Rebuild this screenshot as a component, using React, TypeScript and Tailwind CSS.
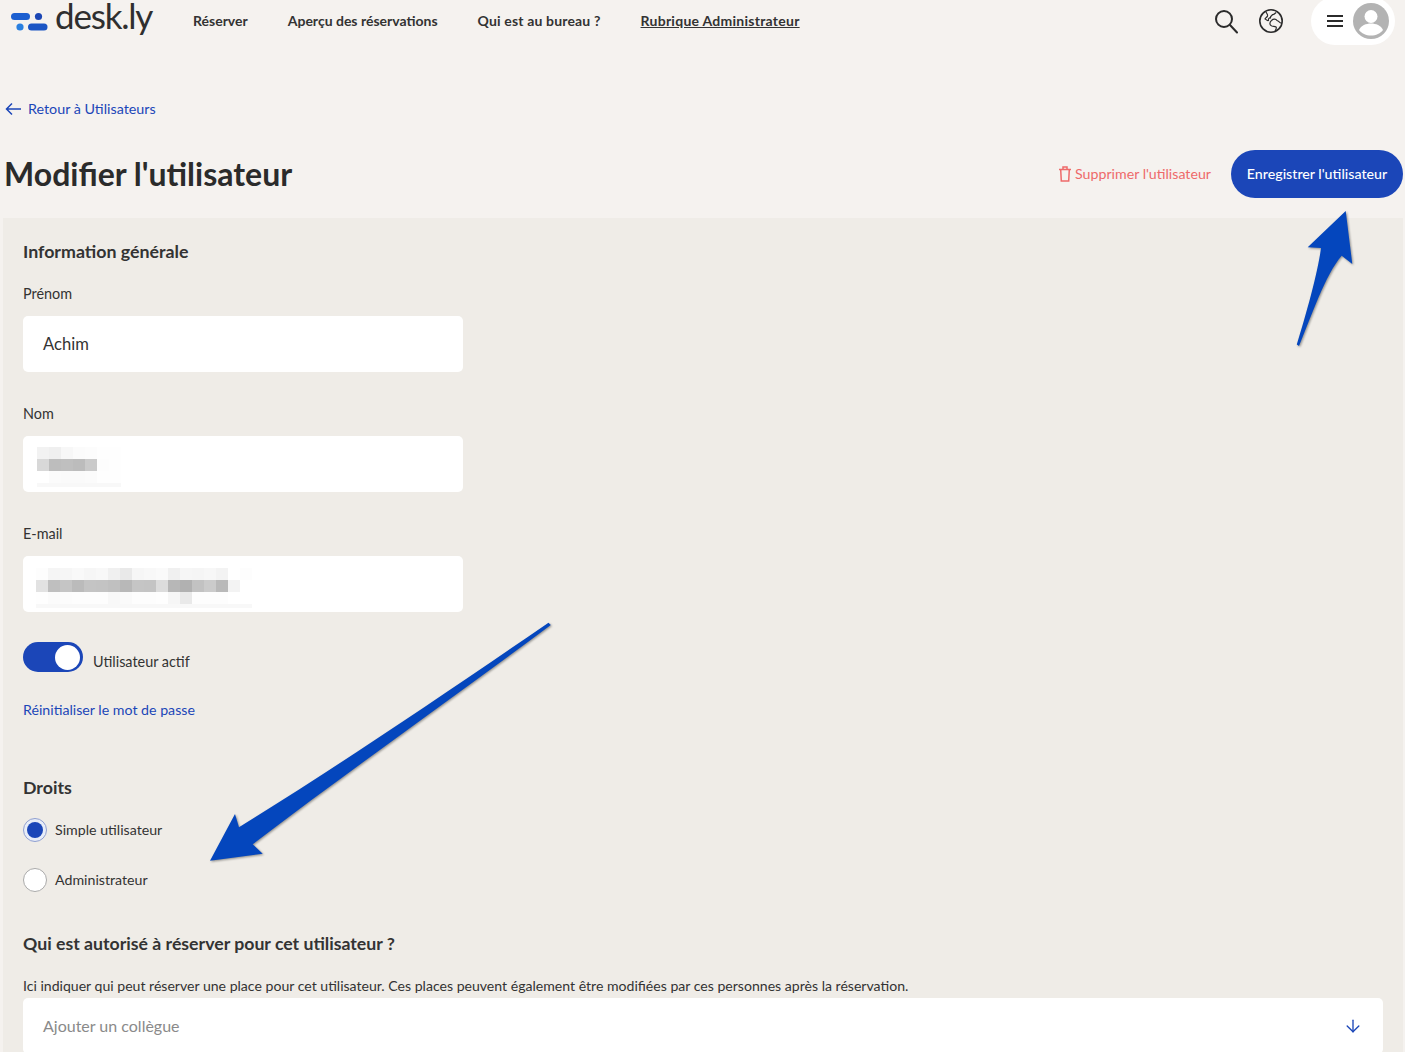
import React from 'react';
import { ArrowDown } from 'lucide-react';

// Pixelated (censored) values: each row is a list of grey levels
const nameBlur = [
  ['#f2f2f2', '#efefef', '#f7f7f7', '#fbfbfb', '#fcfcfc', '#fefefe', '#fefefe'],
  ['#d8d8d8', '#bdbdbd', '#bfbfbf', '#bcbcbc', '#cacaca', '#fdfdfd', '#fefefe'],
  ['#ffffff', '#fbfbfb', '#fafafa', '#fafafa', '#fbfbfb', '#fefefe', '#fefefe'],
];
const emailBlur = [
  ['#fdfdfd', '#f5f5f5', '#f6f6f6', '#f9f9f9', '#f6f6f6', '#f8f8f8', '#f0f0f0', '#e9e9e9', '#f6f6f6', '#f8f8f8', '#fafafa', '#f0f0f0', '#f6f6f6', '#f5f5f5', '#f7f7f7', '#f3f3f3', '#ffffff', '#fdfdfd'],
  ['#e2e2e2', '#bfbfbf', '#c5c5c5', '#bbbbbb', '#c4c4c4', '#c3c3c3', '#c0c0c0', '#b8b8b8', '#c5c5c5', '#c4c4c4', '#dcdcdc', '#b7b7b7', '#b1b1b1', '#c2c2c2', '#cbcbcb', '#b9b9b9', '#f3f3f3', '#ffffff'],
  ['#fefefe', '#fbfbfb', '#fcfcfc', '#fdfdfd', '#fdfdfd', '#fdfdfd', '#f8f8f8', '#fafafa', '#fdfdfd', '#fdfdfd', '#fefefe', '#f6f6f6', '#e9e9e9', '#fdfdfd', '#fdfdfd', '#fdfdfd', '#ffffff', '#ffffff'],
];

const Blur: React.FC<{ rows: string[][] }> = ({ rows }) => (
  <div className="flex flex-col">
    {rows.map((row, i) => (
      <div key={i} className="flex">
        {row.map((c, j) => (
          <div key={j} className="h-3 w-3" style={{ backgroundColor: c }} />
        ))}
      </div>
    ))}
    <div className="h-1 bg-[#f8f8f8]" />
  </div>
);

const Logo = () => (
  <svg width="38" height="20" viewBox="0 0 38 20" className="shrink-0">
    <rect x="1" y="2" width="19" height="7" rx="3.5" fill="#1c5fd0" />
    <circle cx="28.5" cy="5.5" r="3.6" fill="#1b46b4" />
    <circle cx="10" cy="16" r="3.6" fill="#2a80e0" />
    <rect x="18" y="12.5" width="19.5" height="7" rx="3.5" fill="#1b55c4" />
  </svg>
);

const SearchIcon = () => (
  <svg width="24" height="25" viewBox="0 0 24 25" fill="none" stroke="#2b2b2b" strokeWidth="2" strokeLinecap="round">
    <circle cx="10" cy="10" r="8" />
    <path d="M16 16 L23 23.500" />
  </svg>
);

// Globe with continent outlines
const GlobeIcon = () => (
  <svg width="24" height="24" viewBox="0 0 24 24" fill="none" stroke="#2b2b2b" strokeWidth="1.200" strokeLinejoin="round">
    <circle cx="12" cy="12" r="11.200" strokeWidth="1.600" />
    <path d="M7 2.500 C7.500 5 9 5 8.500 7 C8 8.500 6.500 8.500 6 10 C7.500 10.500 8 12 9.500 11.500 C9 9.500 10.500 8.500 11.500 9 C11 7 13 7 13.500 5.500 C15 6 16 4.500 17 3.500" />
    <path d="M12.500 11.500 C14.500 9.500 17 10 18 11.500 C20 12 20.500 14 22 14 M12.500 11.500 C10.500 13 10.500 15.500 12 16.500 C13 18 15.500 17 17 18 C18 19 17 20.500 16 22" />
  </svg>
);

const MenuIcon = () => (
  <svg width="16" height="14" viewBox="0 0 16 14" fill="#2b2b2b">
    <rect y="1" width="16" height="2" />
    <rect y="6" width="16" height="2" />
    <rect y="11" width="16" height="2" />
  </svg>
);

const BackArrow = () => (
  <svg width="16" height="14" viewBox="0 0 16 14" fill="none" stroke="currentColor" strokeWidth="1.500">
    <path d="M16 7 H1.500 M7 1.500 L1.500 7 L7 12.500" />
  </svg>
);

const TrashIcon = () => (
  <svg width="12" height="16" viewBox="0 0 12 16" fill="none" stroke="currentColor" strokeWidth="1.500">
    <path d="M0 3.500 H12 M4 3.500 V1 H8 V3.500 M1.700 3.500 L2.300 15 H9.700 L10.300 3.500" />
  </svg>
);

const Avatar = () => (
  <svg width="36" height="36" viewBox="0 0 36 36">
    <circle cx="18" cy="18" r="18" fill="#b3b3b3" />
    <circle cx="18" cy="13.500" r="6.500" fill="#fff" />
    <path d="M6 27c2-4.500 7-6.500 12-6.500s10 2 12 6.500c-2.500 3.500-7 5.500-12 5.500s-9.500-2-12-5.500z" fill="#fff" />
  </svg>
);

const Field: React.FC<{ label: string; children: React.ReactNode }> = ({ label, children }) => (
  <div className="mb-[31px]">
    <div className="mb-[11px] h-[22px] text-[14.4px] leading-[22px] text-[#333]">{label}</div>
    <div className="flex h-14 w-[440px] items-center rounded-[5px] bg-white">{children}</div>
  </div>
);

const Radio: React.FC<{ label: string; checked?: boolean }> = ({ label, checked }) => (
  <div className="flex h-6 items-center gap-2">
    <span className={`flex h-6 w-6 items-center justify-center rounded-full border ${checked ? 'border-[#8f9fd0] bg-[#e8edf8]' : 'border-[#aaa] bg-white'}`}>
      {checked && <span className="h-4 w-4 rounded-full bg-[#1b46b8]" />}
    </span>
    <span className="text-[14.2px] leading-6 text-[#333]">{label}</span>
  </div>
);

export default function App() {
  return (
    <div className="relative h-[1052px] w-[1405px] overflow-hidden bg-[#f5f2ef] font-['Lato','Liberation_Sans',sans-serif] text-[#2b2b2b]">
      <header className="flex h-[42px] items-center pl-[10px] pr-[10px]">
        <Logo />
        <span className="ml-[7px] -mt-[12px] h-[30px] w-[138px] text-[35px] leading-[30px] -tracking-[1.2px] text-[#2f2f2f]">desk.ly</span>
        <nav className="-mt-px flex gap-10 text-[14px] font-bold text-[#333]">
          <span>Réserver</span>
          <span>Aperçu des réservations</span>
          <span className="tracking-[0.16px]">Qui est au bureau ?</span>
          <span className="tracking-[0.26px] underline">Rubrique Administrateur</span>
        </nav>
        <div className="ml-auto flex items-center">
          <SearchIcon />
          <div className="ml-[21px]"><GlobeIcon /></div>
          <div className="ml-[28px] flex h-12 w-[84px] items-center gap-[10px] rounded-3xl bg-white pl-4">
            <MenuIcon />
            <Avatar />
          </div>
        </div>
      </header>

      <a className="ml-[5px] mt-[55px] flex h-6 items-center gap-[7px] text-[14.3px] text-[#1b46b8]">
        <BackArrow />
        Retour à Utilisateurs
      </a>

      <div className="mt-[29px] flex h-[68px] items-start justify-between pl-1 pr-[2px]">
        <h1 className="mt-[6px] text-[32px] font-bold leading-[36px] text-[#2b2b2b]">Modifier l'utilisateur</h1>
        <div className="flex items-center">
          <span className="flex items-center gap-[4px] text-[14.2px] text-[#ee6a6a]">
            <TrashIcon />
            Supprimer l'utilisateur
          </span>
          <button className="ml-5 h-12 w-[172px] rounded-3xl bg-[#1b46b8] text-[14.2px] font-medium text-white">
            Enregistrer l'utilisateur
          </button>
        </div>
      </div>

      <main className="ml-[3px] mr-[2px] h-[900px] bg-[#efece7] px-5 pt-[19px]">
        <h2 className="mb-[18px] h-7 text-[17.8px] font-bold leading-7 text-[#333]">Information générale</h2>
        <Field label="Prénom">
          <span className="pl-5 text-[16.6px] text-[#333]">Achim</span>
        </Field>
        <Field label="Nom">
          <div className="pl-[14px] pt-[6px]"><Blur rows={nameBlur} /></div>
        </Field>
        <Field label="E-mail">
          <div className="pl-[13px] pt-[8px]"><Blur rows={emailBlur} /></div>
        </Field>

        <div className="-mt-px flex h-[30px] items-center gap-[10px]">
          <span className="flex h-[30px] w-[60px] items-center justify-end rounded-full bg-[#1b46b8] pr-[3px]">
            <span className="h-[25px] w-[25px] rounded-full bg-white" />
          </span>
          <span className="mt-[10px] text-[14.4px] text-[#333]">Utilisateur actif</span>
        </div>
        <a className="mt-[26px] block h-6 text-[14.2px] leading-6 text-[#1b46b8]">Réinitialiser le mot de passe</a>

        <h2 className="mt-[51px] h-7 text-[17.8px] font-bold leading-7 text-[#333]">Droits</h2>
        <div className="mt-[17px] flex flex-col gap-[26px]">
          <Radio label="Simple utilisateur" checked />
          <Radio label="Administrateur" />
        </div>

        <h2 className="mt-[38px] h-7 text-[17.700px] font-bold leading-7 text-[#333]">Qui est autorisé à réserver pour cet utilisateur ?</h2>
        <p className="mt-4 h-6 text-[14.08px] leading-6 text-[#333]">
          Ici indiquer qui peut réserver une place pour cet utilisateur. Ces places peuvent également être modifiées par ces personnes après la réservation.
        </p>
        <div className="flex h-14 items-center justify-between rounded-[5px] bg-white pl-5 pr-5">
          <span className="text-[16px] text-[#8a8a8a]">Ajouter un collègue</span>
          <ArrowDown size={20} strokeWidth={1.6} className="text-[#1b46b8]" />
        </div>
      </main>

      {/* annotation arrows drawn on top of the screenshot */}
      <svg className="pointer-events-none absolute left-0 top-0 drop-shadow-[1px_1px_1px_rgba(0,0,0,0.4)]" width="1405" height="1052">
        <path d="M1345.700 211 L1307.700 247.300 L1321 248 C1318 272 1306 315 1296.800 344.500 L1299 346 C1312 315 1325 275 1341.700 255.700 L1352.300 264 Z" fill="#0446bd" />
        <path d="M550.800 625 L548.500 622.800 C450 690 340 765 239 827.300 L235 814 L210 860.700 L262.700 853.700 L252.700 844.300 C350 770 450 700 550.800 625 Z" fill="#0446bd" />
      </svg>
    </div>
  );
}
